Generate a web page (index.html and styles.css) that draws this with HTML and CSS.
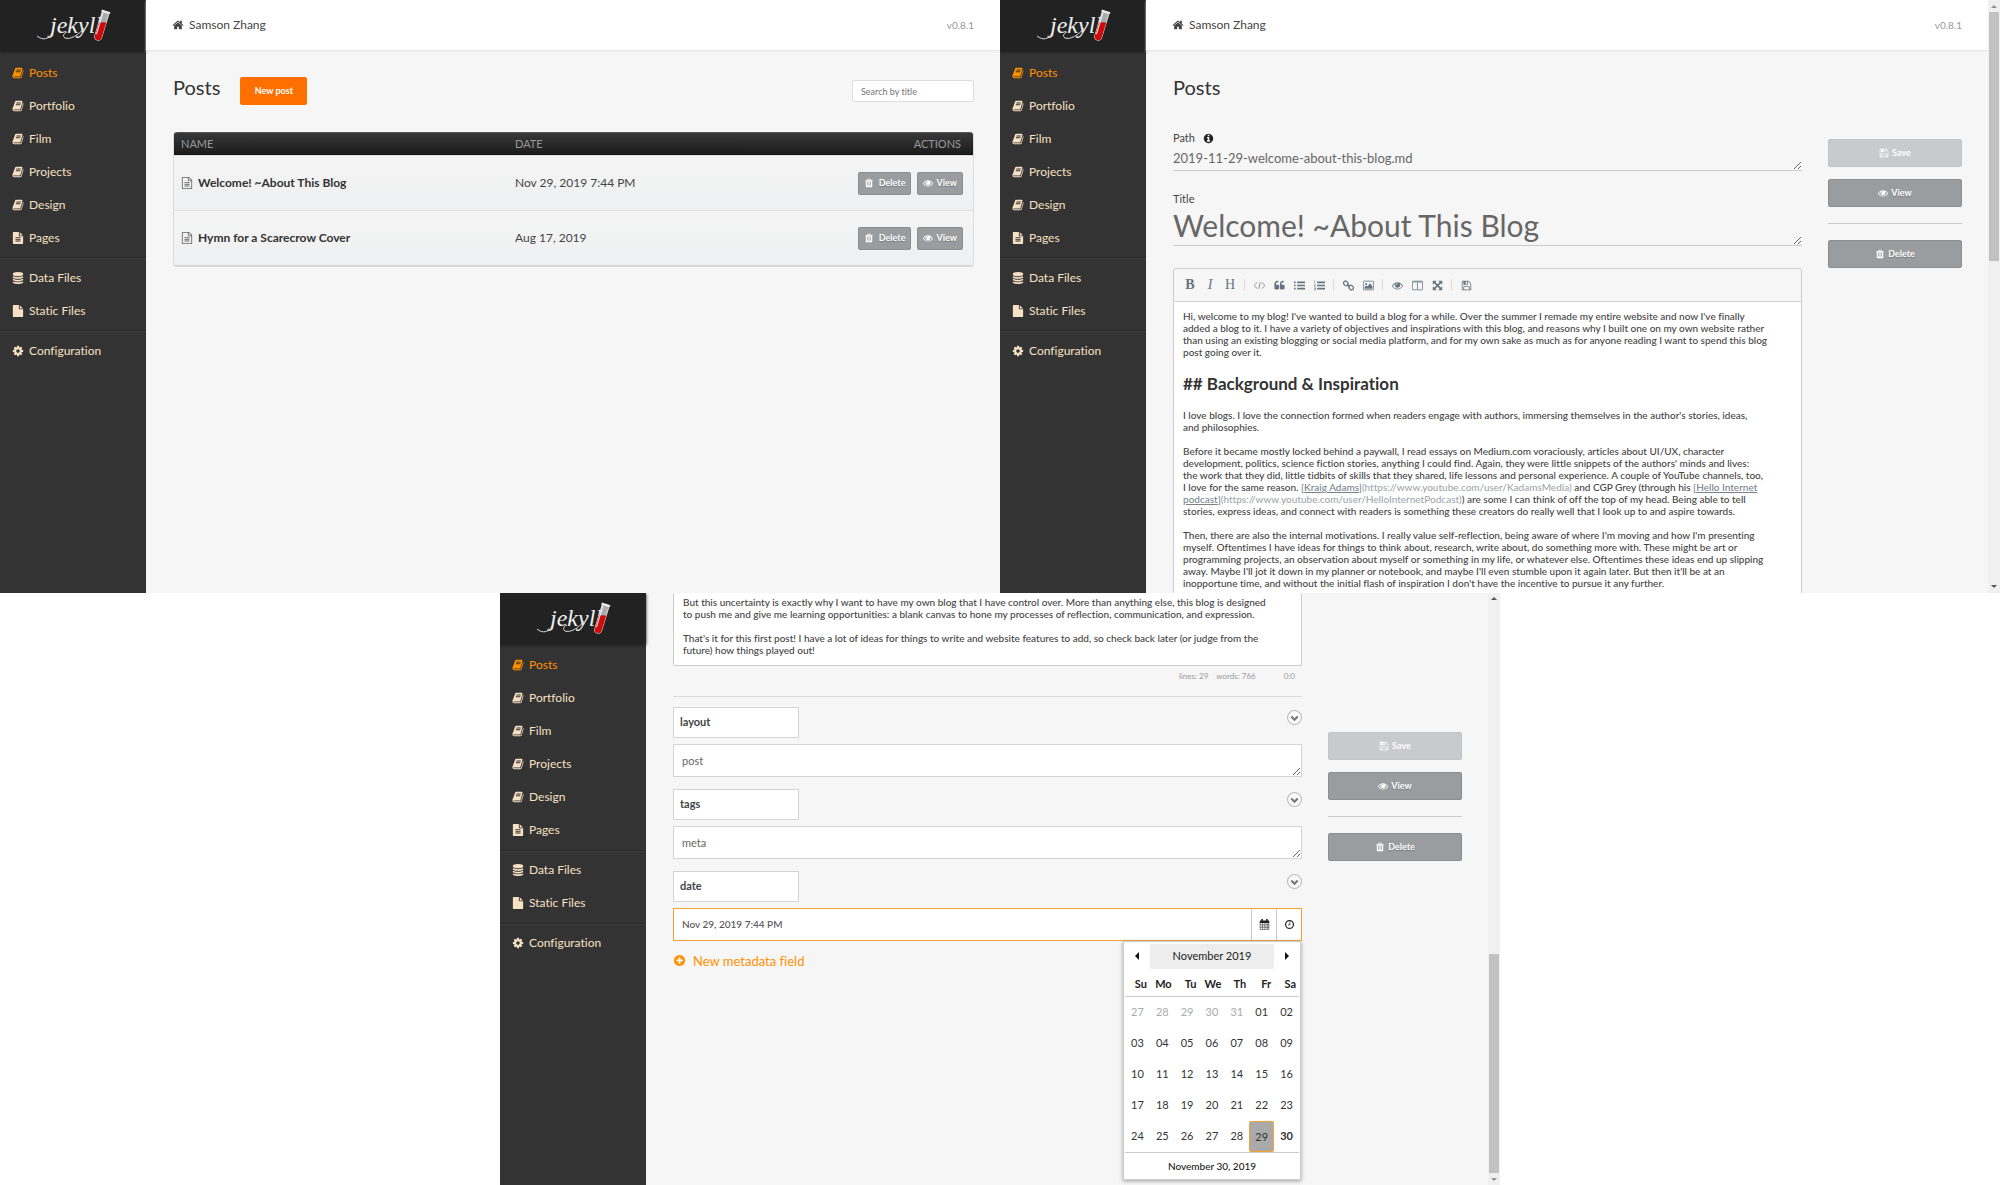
FILE: index.html
```
<!DOCTYPE html>
<html lang="en">
<head>
<meta charset="utf-8">
<title>Posts</title>
<link rel="stylesheet" href="styles.css">
</head>
<body>
<svg class="sprite" aria-hidden="true">
  <symbol id="home" viewBox="0 0 1792 1792"><path d="M1472 992v480q0 26-19 45t-45 19h-384v-384h-256v384h-384q-26 0-45-19t-19-45v-480q0-1 .5-3t.5-3l575-474 575 474q1 2 1 6zm223-69l-62 74q-8 9-21 11h-3q-13 0-21-7l-692-577-692 577q-12 8-24 7-13-2-21-11l-62-74q-8-10-7-23.500t11-21.500l719-599q32-26 76-26t76 26l244 204v-195q0-14 9-23t23-9h192q14 0 23 9t9 23v408l219 182q10 8 11 21.500t-7 23.500z"/></symbol>
  <symbol id="book" viewBox="0 0 1792 1792"><path d="M1703 478q40 57 18 129l-275 906q-19 64-76.500 107.500t-122.500 43.500h-923q-77 0-148.500-53.500t-99.500-131.500q-24-67-2-127 0-4 3-27t4-37q1-8-3-21.500t-3-19.500q2-11 8-21t16.500-23.500 16.500-23.500q23-38 45-91.500t30-91.500q3-10 .5-30t-.5-28q3-11 17-28t17-23q21-36 42-92t25-90q1-9-2.500-32t.5-28q4-13 22-30.500t22-22.500q19-26 42.500-84.500t27.500-96.500q1-8-3-25.500t-2-26.500q2-8 9-18t18-23 17-21q8-12 16.500-30.500t15-35 16-36 19.500-32 26.500-23.500 36-11.500 47.500 5.500l-1 3q38-9 51-9h761q74 0 114 56t18 130l-274 906q-36 119-71.500 153.500t-128.500 34.500h-869q-27 0-38 15-11 16-1 43 24 70 144 70h923q29 0 56-15.500t35-41.500l300-987q7-22 5-57 38 15 59 43zm-1064 2q-4 13 2 22.500t20 9.500h608q13 0 25.500-9.500t16.500-22.500l21-64q4-13-2-22.500t-20-9.500h-608q-13 0-25.500 9.500t-16.500 22.500zm-83 256q-4 13 2 22.500t20 9.500h608q13 0 25.500-9.500t16.500-22.500l21-64q4-13-2-22.500t-20-9.500h-608q-13 0-25.500 9.500t-16.500 22.500z"/></symbol>
  <symbol id="page" viewBox="0 0 1792 1792"><path d="M1596 476q14 14 28 36h-472v-472q22 14 36 28zm-476 164h544v1056q0 40-28 68t-68 28h-1344q-40 0-68-28t-28-68v-1600q0-40 28-68t68-28h800v544q0 40 28 68t68 28zm160 736v-64q0-14-9-23t-23-9h-704q-14 0-23 9t-9 23v64q0 14 9 23t23 9h704q14 0 23-9t9-23zm0-256v-64q0-14-9-23t-23-9h-704q-14 0-23 9t-9 23v64q0 14 9 23t23 9h704q14 0 23-9t9-23zm0-256v-64q0-14-9-23t-23-9h-704q-14 0-23 9t-9 23v64q0 14 9 23t23 9h704q14 0 23-9t9-23z"/></symbol>
  <symbol id="file" viewBox="0 0 1792 1792"><path d="M1152 512v-472q22 14 36 28l408 408q14 14 28 36h-472zm-128 32q0 40 28 68t68 28h544v1056q0 40-28 68t-68 28h-1344q-40 0-68-28t-28-68v-1600q0-40 28-68t68-28h800v544z"/></symbol>
  <symbol id="page-o" viewBox="0 0 1792 1792"><path d="M1596 380q28 28 48 76t20 88v1152q0 40-28 68t-68 28h-1344q-40 0-68-28t-28-68v-1600q0-40 28-68t68-28h896q40 0 88 20t76 48zm-444-244v376h376q-10-29-22-41l-313-313q-12-12-41-22zm384 1528v-1024h-416q-40 0-68-28t-28-68v-416h-768v1536h1280zm-1024-864q0-14 9-23t23-9h704q14 0 23 9t9 23v64q0 14-9 23t-23 9h-704q-14 0-23-9t-9-23v-64zm736 224q14 0 23 9t9 23v64q0 14-9 23t-23 9h-704q-14 0-23-9t-9-23v-64q0-14 9-23t23-9h704zm0 256q14 0 23 9t9 23v64q0 14-9 23t-23 9h-704q-14 0-23-9t-9-23v-64q0-14 9-23t23-9h704z"/></symbol>
  <symbol id="database" viewBox="0 0 1792 1792"><path d="M896 768q237 0 443-43t325-127v170q0 69-103 128t-280 93.500-385 34.500-385-34.500-280-93.500-103-128v-170q119 84 325 127t443 43zm0 768q237 0 443-43t325-127v170q0 69-103 128t-280 93.500-385 34.500-385-34.500-280-93.500-103-128v-170q119 84 325 127t443 43zm0-384q237 0 443-43t325-127v170q0 69-103 128t-280 93.500-385 34.500-385-34.500-280-93.500-103-128v-170q119 84 325 127t443 43zm0-1152q208 0 385 34.500t280 93.500 103 128v128q0 69-103 128t-280 93.500-385 34.500-385-34.500-280-93.500-103-128v-128q0-69 103-128t280-93.500 385-34.500z"/></symbol>
  <symbol id="cog" viewBox="0 0 1792 1792"><path d="M1152 896q0-106-75-181t-181-75-181 75-75 181 75 181 181 75 181-75 75-181zm512-109v222q0 12-8 23t-20 13l-185 28q-19 54-39 91 35 50 107 138 10 12 10 25t-9 23q-27 37-99 108t-94 71q-12 0-26-9l-138-108q-44 23-91 38-16 136-29 186-7 28-36 28h-222q-14 0-24.500-8.500t-11.500-21.500l-28-184q-49-16-90-37l-141 107q-10 9-25 9-14 0-25-11-126-114-165-168-7-10-7-23 0-12 8-23 15-21 51-66.500t54-70.500q-27-50-41-99l-183-27q-13-2-21-12.500t-8-23.500v-222q0-12 8-23t19-13l186-28q14-46 39-92-40-57-107-138-10-12-10-24 0-10 9-23 26-36 98.500-107.500t94.500-71.500q13 0 26 10l138 107q44-23 91-38 16-136 29-186 7-28 36-28h222q14 0 24.500 8.500t11.500 21.500l28 184q49 16 90 37l142-107q9-9 24-9 13 0 25 10 129 119 165 170 7 8 7 22 0 12-8 23-15 21-51 66.500t-54 70.500q26 50 41 98l183 28q13 2 21 12.500t8 23.500z"/></symbol>
  <symbol id="trash" viewBox="0 0 1792 1792"><path d="M704 1376v-704q0-14-9-23t-23-9h-64q-14 0-23 9t-9 23v704q0 14 9 23t23 9h64q14 0 23-9t9-23zm256 0v-704q0-14-9-23t-23-9h-64q-14 0-23 9t-9 23v704q0 14 9 23t23 9h64q14 0 23-9t9-23zm256 0v-704q0-14-9-23t-23-9h-64q-14 0-23 9t-9 23v704q0 14 9 23t23 9h64q14 0 23-9t9-23zm-544-992h448l-48-117q-7-9-17-11h-317q-10 2-17 11zm928 32v64q0 14-9 23t-23 9h-96v948q0 83-47 143.500t-113 60.500h-832q-66 0-113-58.500t-47-141.500v-952h-96q-14 0-23-9t-9-23v-64q0-14 9-23t23-9h309l70-167q15-37 54-63t79-26h320q40 0 79 26t54 63l70 167h309q14 0 23 9t9 23z"/></symbol>
  <symbol id="eye" viewBox="0 0 1792 1792"><path d="M1664 960q-152-236-381-353 61 104 61 225 0 185-131.500 316.500t-316.500 131.500-316.500-131.500-131.500-316.500q0-121 61-225-229 117-381 353 133 205 333.500 326.500t434.500 121.500 434.500-121.500 333.500-326.500zm-720-384q0-20-14-34t-34-14q-125 0-214.500 89.500t-89.500 214.500q0 20 14 34t34 14 34-14 14-34q0-86 61-147t147-61q20 0 34-14t14-34zm848 384q0 34-20 69-140 230-376.500 368.500t-499.500 138.500-499.500-139-376.500-368q-20-35-20-69t20-69q140-229 376.500-368t499.500-139 499.500 139 376.500 368q20 35 20 69z"/></symbol>
  <symbol id="save" viewBox="0 0 1792 1792"><path d="M512 1536h768v-384h-768v384zm896 0h128v-896q0-14-10-38.500t-20-34.500l-281-281q-10-10-34-20t-39-10v416q0 40-28 68t-68 28h-576q-40 0-68-28t-28-68v-416h-128v1280h128v-416q0-40 28-68t68-28h832q40 0 68 28t28 68v416zm-384-928v-320q0-13-9.500-22.500t-22.500-9.500h-192q-13 0-22.500 9.500t-9.500 22.500v320q0 13 9.500 22.500t22.500 9.500h192q13 0 22.500-9.500t9.500-22.500zm640 32v928q0 40-28 68t-68 28h-1344q-40 0-68-28t-28-68v-1344q0-40 28-68t68-28h928q40 0 88 20t76 48l280 280q28 28 48 76t20 88z"/></symbol>
  <symbol id="info" viewBox="0 0 1792 1792"><path d="M1152 1376v-160q0-14-9-23t-23-9h-96v-512q0-14-9-23t-23-9h-320q-14 0-23 9t-9 23v160q0 14 9 23t23 9h96v320h-96q-14 0-23 9t-9 23v160q0 14 9 23t23 9h448q14 0 23-9t9-23zm-128-896v-160q0-14-9-23t-23-9h-192q-14 0-23 9t-9 23v160q0 14 9 23t23 9h192q14 0 23-9t9-23zm640 416q0 209-103 385.500t-279.500 279.500-385.500 103-385.500-103-279.500-279.500-103-385.500 103-385.500 279.500-279.500 385.500-103 385.500 103 279.500 279.500 103 385.500z"/></symbol>
  <symbol id="plus" viewBox="0 0 1792 1792"><path d="M1344 960v-128q0-26-19-45t-45-19h-256v-256q0-26-19-45t-45-19h-128q-26 0-45 19t-19 45v256h-256q-26 0-45 19t-19 45v128q0 26 19 45t45 19h256v256q0 26 19 45t45 19h128q26 0 45-19t19-45v-256h256q26 0 45-19t19-45zm320-64q0 209-103 385.500t-279.500 279.500-385.500 103-385.500-103-279.500-279.500-103-385.500 103-385.500 279.500-279.500 385.500-103 385.500 103 279.500 279.500 103 385.500z"/></symbol>
  <symbol id="quote" viewBox="0 0 1792 1792"><path d="M832 960v384q0 80-56 136t-136 56h-384q-80 0-136-56t-56-136v-704q0-104 40.500-198.500t109.500-163.500 163.500-109.500 198.500-40.500h64q26 0 45 19t19 45v128q0 26-19 45t-45 19h-64q-106 0-181 75t-75 181v32q0 40 28 68t68 28h224q80 0 136 56t56 136zm896 0v384q0 80-56 136t-136 56h-384q-80 0-136-56t-56-136v-704q0-104 40.500-198.500t109.500-163.500 163.500-109.500 198.500-40.500h64q26 0 45 19t19 45v128q0 26-19 45t-45 19h-64q-106 0-181 75t-75 181v32q0 40 28 68t68 28h224q80 0 136 56t56 136z"/></symbol>
  <symbol id="code" viewBox="0 0 14 14"><path class="line" d="M4 3L0 7l4 4M10 3l4 4-4 4M8 3L6 11"/></symbol>
  <symbol id="ul" viewBox="0 0 14 14"><path d="M0 2h2v2H0zM0 6h2v2H0zM0 10h2v2H0zM4 2h10v2H4zM4 6h10v2H4zM4 10h10v2H4z"/></symbol>
  <symbol id="ol" viewBox="0 0 14 14"><path d="M4 2h10v2H4zM4 6h10v2H4zM4 10h10v2H4z"/><path class="line thin" d="M0 1h1v3M0 6h2l-2 2h2M0 10h2v3H0M0 11h2"/></symbol>
  <symbol id="link" viewBox="0 0 14 14"><g class="line mid"><rect x="1" y="2" width="6" height="5" rx="2" transform="rotate(45 4 4)"/><rect x="7" y="7" width="6" height="5" rx="2" transform="rotate(45 10 10)"/><path d="M5 5l4 4"/></g></symbol>
  <symbol id="picture" viewBox="0 0 14 14"><rect class="line" x="0.500" y="1.500" width="13" height="11" rx="1"/><circle cx="4" cy="5" r="1.300"/><path d="M2 11V9l2-2 2 1 3-4 3 4v3z"/></symbol>
  <symbol id="columns" viewBox="0 0 14 14"><rect class="line" x="0.500" y="1.500" width="13" height="11" rx="1"/><path class="line" d="M1 2.500h12M7 3v9"/></symbol>
  <symbol id="expand" viewBox="0 0 14 14"><path d="M1 1h5L1 6zM13 1v5L8 1zM1 13V8l5 5zM13 13H8l5-5z"/><path class="line wide" d="M3 3l8 8M11 3l-8 8"/></symbol>
  <symbol id="chevron" viewBox="0 0 14 14"><circle class="ring" cx="7" cy="7" r="6.500"/><path class="tick" d="M4 6l3 3 3-3"/></symbol>
  <symbol id="calendar" viewBox="0 0 14 14"><path d="M1 2h2V0h2v2h4V0h2v2h2v3H1z"/><path class="line thin" d="M1.500 4.500h11v9h-11zM1 7.500h12M1 10.500h12M4.500 5v8M7.500 5v8M10.500 5v8"/></symbol>
  <symbol id="clock" viewBox="0 0 14 14"><circle class="line mid" cx="7" cy="7" r="5"/><path class="line" d="M7.500 4v3.500H5"/></symbol>
  <symbol id="jekyll" viewBox="0 0 146 50">
    <text class="script" x="50" y="33">jekyll</text>
    <path d="M52 33c-3 6-9 8-15 3M84 28c-5 7-14 12-19 10-3-2-1-5 2-6" fill="none" stroke="#ddd"/>
    <g transform="rotate(17 101 26)"><path d="M98 12h7v25a3.500 3.500 0 0 1-7 0z" fill="#aaa" stroke="#ddd"/><path d="M98 23l7-2v16a3.500 3.500 0 0 1-7 0z" fill="#d00a0a"/><path d="M97 11h9" stroke="#eee" stroke-width="2"/><path d="M99 13v22" stroke="#eee"/></g>
  </symbol>
</svg>

<main class="board">
  <!-- Post list -->
  <section class="screen">
    <aside class="sidebar">
      <a class="logo" href="#" aria-label="Home"><svg><use href="#jekyll"/></svg></a>
      <nav>
        <a class="active" href="#"><svg class="icon"><use href="#book"/></svg>Posts</a>
        <a href="#"><svg class="icon"><use href="#book"/></svg>Portfolio</a>
        <a href="#"><svg class="icon"><use href="#book"/></svg>Film</a>
        <a href="#"><svg class="icon"><use href="#book"/></svg>Projects</a>
        <a href="#"><svg class="icon"><use href="#book"/></svg>Design</a>
        <a href="#"><svg class="icon"><use href="#page"/></svg>Pages</a>
        <hr>
        <a href="#"><svg class="icon"><use href="#database"/></svg>Data Files</a>
        <a href="#"><svg class="icon"><use href="#file"/></svg>Static Files</a>
        <hr>
        <a href="#"><svg class="icon"><use href="#cog"/></svg>Configuration</a>
      </nav>
    </aside>
    <div class="page">
      <header class="topbar"><a href="#"><svg class="icon"><use href="#home"/></svg>Samson Zhang</a><span class="version">v0.8.1</span></header>
      <div class="content">
        <div class="heading">
          <h1>Posts</h1>
          <button class="btn primary">New post</button>
          <input class="search" type="search" placeholder="Search by title" aria-label="Search by title">
        </div>
        <table class="posts">
          <thead><tr><th>NAME</th><th>DATE</th><th>ACTIONS</th></tr></thead>
          <tbody>
            <tr><td><a href="#"><svg class="icon"><use href="#page-o"/></svg>Welcome! ~About This Blog</a></td><td>Nov 29, 2019 7:44 PM</td><td><div class="actions"><button class="btn"><svg class="icon"><use href="#trash"/></svg>Delete</button><button class="btn"><svg class="icon"><use href="#eye"/></svg>View</button></div></td></tr>
            <tr><td><a href="#"><svg class="icon"><use href="#page-o"/></svg>Hymn for a Scarecrow Cover</a></td><td>Aug 17, 2019</td><td><div class="actions"><button class="btn"><svg class="icon"><use href="#trash"/></svg>Delete</button><button class="btn"><svg class="icon"><use href="#eye"/></svg>View</button></div></td></tr>
          </tbody>
        </table>
      </div>
    </div>
  </section>

  <!-- Post editor, top of the page -->
  <section class="screen">
    <aside class="sidebar">
      <a class="logo" href="#" aria-label="Home"><svg><use href="#jekyll"/></svg></a>
      <nav>
        <a class="active" href="#"><svg class="icon"><use href="#book"/></svg>Posts</a>
        <a href="#"><svg class="icon"><use href="#book"/></svg>Portfolio</a>
        <a href="#"><svg class="icon"><use href="#book"/></svg>Film</a>
        <a href="#"><svg class="icon"><use href="#book"/></svg>Projects</a>
        <a href="#"><svg class="icon"><use href="#book"/></svg>Design</a>
        <a href="#"><svg class="icon"><use href="#page"/></svg>Pages</a>
        <hr>
        <a href="#"><svg class="icon"><use href="#database"/></svg>Data Files</a>
        <a href="#"><svg class="icon"><use href="#file"/></svg>Static Files</a>
        <hr>
        <a href="#"><svg class="icon"><use href="#cog"/></svg>Configuration</a>
      </nav>
    </aside>
    <div class="page">
      <header class="topbar"><a href="#"><svg class="icon"><use href="#home"/></svg>Samson Zhang</a><span class="version">v0.8.1</span></header>
      <div class="content">
        <div class="heading"><h1>Posts</h1></div>
        <div class="editing">
          <div class="fields">
            <label for="path">Path <svg class="icon"><use href="#info"/></svg></label>
            <textarea id="path" class="path" rows="1">2019-11-29-welcome-about-this-blog.md</textarea>
            <label for="title">Title</label>
            <textarea id="title" class="title" rows="1">Welcome! ~About This Blog</textarea>
            <div class="editor">
              <div class="toolbar">
                <button class="b" aria-label="Bold">B</button><button class="i" aria-label="Italic">I</button><button aria-label="Heading">H</button><i></i>
                <button aria-label="Code"><svg class="icon"><use href="#code"/></svg></button><button aria-label="Quote"><svg class="icon"><use href="#quote"/></svg></button><button aria-label="Bullets"><svg class="icon"><use href="#ul"/></svg></button><button aria-label="Numbers"><svg class="icon"><use href="#ol"/></svg></button><i></i>
                <button aria-label="Link"><svg class="icon"><use href="#link"/></svg></button><button aria-label="Image"><svg class="icon"><use href="#picture"/></svg></button><i></i>
                <button aria-label="Preview"><svg class="icon"><use href="#eye"/></svg></button><button aria-label="Side by side"><svg class="icon"><use href="#columns"/></svg></button><button aria-label="Fullscreen"><svg class="icon"><use href="#expand"/></svg></button><i></i>
                <button aria-label="Save"><svg class="icon"><use href="#save"/></svg></button>
              </div>
              <div class="text">
                <p>Hi, welcome to my blog! I've wanted to build a blog for a while. Over the summer I remade my entire website and now I've finally<br>added a blog to it. I have a variety of objectives and inspirations with this blog, and reasons why I built one on my own website rather<br>than using an existing blogging or social media platform, and for my own sake as much as for anyone reading I want to spend this blog<br>post going over it.</p>
                <h2>## Background &amp; Inspiration</h2>
                <p>I love blogs. I love the connection formed when readers engage with authors, immersing themselves in the author's stories, ideas,<br>and philosophies.</p>
                <p>Before it became mostly locked behind a paywall, I read essays on Medium.com voraciously, articles about UI/UX, character<br>development, politics, science fiction stories, anything I could find. Again, they were little snippets of the authors' minds and lives:<br>the work that they did, little tidbits of skills that they shared, life lessons and personal experience. A couple of YouTube channels, too,<br>I love for the same reason. <span class="md">[<u>Kraig Adams</u>]</span><span class="url">(https://www.youtube.com/user/KadamsMedia)</span> and CGP Grey (through his <span class="md">[<u>Hello Internet </u></span><br><span class="md"><u>podcast</u>]</span><span class="url">(https://www.youtube.com/user/HelloInternetPodcast)</span>) are some I can think of off the top of my head. Being able to tell<br>stories, express ideas, and connect with readers is something these creators do really well that I look up to and aspire towards.</p>
                <p>Then, there are also the internal motivations. I really value self-reflection, being aware of where I'm moving and how I'm presenting<br>myself. Oftentimes I have ideas for things to think about, research, write about, do something more with. These might be art or<br>programming projects, an observation about myself or something in my life, or whatever else. Oftentimes these ideas end up slipping<br>away. Maybe I'll jot it down in my planner or notebook, and maybe I'll even stumble upon it again later. But then it'll be at an<br>inopportune time, and without the initial flash of inspiration I don't have the incentive to pursue it any further.</p>
              </div>
            </div>
          </div>
          <div class="side">
            <button class="btn" disabled><svg class="icon"><use href="#save"/></svg>Save</button>
            <button class="btn"><svg class="icon"><use href="#eye"/></svg>View</button>
            <hr>
            <button class="btn"><svg class="icon"><use href="#trash"/></svg>Delete</button>
          </div>
        </div>
      </div>
    </div>
    <div class="scrollbar at-top" aria-hidden="true"><b class="up"></b><span class="thumb"></span><b class="down"></b></div>
  </section>

  <!-- Post editor, scrolled to the metadata -->
  <section class="screen lower">
    <aside class="sidebar">
      <a class="logo" href="#" aria-label="Home"><svg><use href="#jekyll"/></svg></a>
      <nav>
        <a class="active" href="#"><svg class="icon"><use href="#book"/></svg>Posts</a>
        <a href="#"><svg class="icon"><use href="#book"/></svg>Portfolio</a>
        <a href="#"><svg class="icon"><use href="#book"/></svg>Film</a>
        <a href="#"><svg class="icon"><use href="#book"/></svg>Projects</a>
        <a href="#"><svg class="icon"><use href="#book"/></svg>Design</a>
        <a href="#"><svg class="icon"><use href="#page"/></svg>Pages</a>
        <hr>
        <a href="#"><svg class="icon"><use href="#database"/></svg>Data Files</a>
        <a href="#"><svg class="icon"><use href="#file"/></svg>Static Files</a>
        <hr>
        <a href="#"><svg class="icon"><use href="#cog"/></svg>Configuration</a>
      </nav>
    </aside>
    <div class="page">
      <div class="content scrolled">
        <div class="editing">
          <div class="fields">
            <div class="editor tail">
              <div class="text">
                <p>But this uncertainty is exactly why I want to have my own blog that I have control over. More than anything else, this blog is designed<br>to push me and give me learning opportunities: a blank canvas to hone my processes of reflection, communication, and expression.</p>
                <p>That's it for this first post! I have a lot of ideas for things to write and website features to add, so check back later (or judge from the<br>future) how things played out!</p>
              </div>
            </div>
            <div class="status"><span>lines: 29</span><span>words: 766</span><span class="cursor">0:0</span></div>
            <hr>
            <div class="meta">
              <div class="key"><input type="text" value="layout" aria-label="Field name"><button aria-label="Type"><svg><use href="#chevron"/></svg></button></div>
              <textarea rows="1" aria-label="layout">post</textarea>
            </div>
            <div class="meta">
              <div class="key"><input type="text" value="tags" aria-label="Field name"><button aria-label="Type"><svg><use href="#chevron"/></svg></button></div>
              <textarea rows="1" aria-label="tags">meta</textarea>
            </div>
            <div class="meta">
              <div class="key"><input type="text" value="date" aria-label="Field name"><button aria-label="Type"><svg><use href="#chevron"/></svg></button></div>
              <div class="picker">
                <input type="text" value="Nov 29, 2019 7:44 PM" aria-label="date">
                <button aria-label="Pick date"><svg class="icon"><use href="#calendar"/></svg></button>
                <button aria-label="Pick time"><svg class="icon"><use href="#clock"/></svg></button>
                <div class="calendar">
                  <div class="month"><button class="prev" aria-label="Previous month"></button><button class="name">November 2019</button><button class="next" aria-label="Next month"></button></div>
                  <table>
                    <thead><tr><th>Su</th><th>Mo</th><th>Tu</th><th>We</th><th>Th</th><th>Fr</th><th>Sa</th></tr></thead>
                    <tbody>
                      <tr><td class="off">27</td><td class="off">28</td><td class="off">29</td><td class="off">30</td><td class="off">31</td><td>01</td><td>02</td></tr>
                      <tr><td>03</td><td>04</td><td>05</td><td>06</td><td>07</td><td>08</td><td>09</td></tr>
                      <tr><td>10</td><td>11</td><td>12</td><td>13</td><td>14</td><td>15</td><td>16</td></tr>
                      <tr><td>17</td><td>18</td><td>19</td><td>20</td><td>21</td><td>22</td><td>23</td></tr>
                      <tr><td>24</td><td>25</td><td>26</td><td>27</td><td>28</td><td><span class="picked">29</span></td><td class="today">30</td></tr>
                    </tbody>
                  </table>
                  <button class="foot">November 30, 2019</button>
                </div>
              </div>
            </div>
            <a class="add" href="#"><svg class="icon"><use href="#plus"/></svg>New metadata field</a>
          </div>
          <div class="side">
            <button class="btn" disabled><svg class="icon"><use href="#save"/></svg>Save</button>
            <button class="btn"><svg class="icon"><use href="#eye"/></svg>View</button>
            <hr>
            <button class="btn"><svg class="icon"><use href="#trash"/></svg>Delete</button>
          </div>
        </div>
      </div>
    </div>
    <div class="scrollbar at-bottom" aria-hidden="true"><b class="up"></b><span class="thumb"></span><b class="down"></b></div>
  </section>
</main>
</body>
</html>
```
FILE: styles.css
```
* { box-sizing: border-box; }
body { margin: 0; background: #fff; color: #444; font: 12px/16px Lato, sans-serif; font-variant-ligatures: none; }
button, input, textarea { font: inherit; color: inherit; margin: 0; padding: 0; border: 0; background: none; border-radius: 0; font-variant-ligatures: none; outline: 0; }
a { color: inherit; text-decoration: none; }
hr { margin: 0; border: 0; }
.sprite { display: none; }
.icon { width: 12px; height: 12px; flex: none; fill: currentColor; }
.line { fill: none; stroke: currentColor; }
.thin { opacity: .7; }
.mid { stroke-width: 1.5; }
.wide { stroke-width: 2; }

.board { display: grid; grid-template-columns: repeat(4, 1fr); grid-template-rows: 50vh 50vh; }
.screen { grid-column: span 2; display: flex; min-height: 0; overflow: hidden; background: #f6f6f6; }
.screen.lower { grid-column: 2 / span 2; }

/* Sidebar */
.sidebar { width: 146px; flex: none; background: #333; color: #f7e0c4; }
.logo { display: block; height: 51px; background: #222; box-shadow: 0 1px 3px #1a1a1a; }
.logo svg { display: block; width: 146px; height: 50px; }
.script { font: italic 24px "Liberation Serif", serif; fill: #eee; }
.sidebar nav { padding-top: 5px; }
.sidebar nav a { display: flex; align-items: center; gap: 5px; height: 33px; padding-left: 12px; }
.sidebar nav hr { height: 2px; margin: 3px 0 2px; background: #3d3d3d; border-top: 1px solid #292929; }
.sidebar .active { color: #ff9100; }

/* Page frame */
.page { flex: 1; min-width: 0; }
.topbar { display: flex; justify-content: space-between; align-items: center; height: 51px; padding: 0 26px; background: #fff; border-bottom: 1px solid #e8e8e8; box-shadow: 0 1px 2px #eee; }
.topbar a { display: flex; align-items: center; gap: 5px; }
.version { font-size: 10px; color: #999; }
.content { padding: 24px 26px 0 27px; }
.content.scrolled { padding-top: 0; }
.heading { display: flex; align-items: center; height: 32px; }
h1 { margin: 0; font-size: 20px; line-height: 26px; font-weight: 400; color: #333; padding-bottom: 8px; }
.btn { display: flex; align-items: center; justify-content: center; gap: 3px; height: 28px; border-radius: 2px; background: #9a9d9f; border: 1px solid #8b8d8f; color: #fff; font-size: 9px; font-weight: 700; text-shadow: 0 1px 1px #777; }
.btn .icon { width: 10px; height: 10px; }
.btn:disabled { background: #c9cacb; border-color: #c2c3c4; text-shadow: none; }
.btn.primary { width: 67px; margin-left: 20px; background: #ff6f00; border-color: #ff6f00; text-shadow: none; }
.search { width: 122px; height: 22px; margin-left: auto; padding: 0 8px; font-size: 9px; background: #fff; border: 1px solid #ddd; border-radius: 2px; }
.search::placeholder { color: #757575; opacity: 1; }

/* Post list */
.posts { width: 100%; margin-top: 25px; border-collapse: separate; border-spacing: 0; table-layout: fixed; border: 1px solid #ddd; border-top: 0; border-bottom: 2px solid #d8d8d8; border-radius: 3px; }
.posts th { height: 23px; padding: 0 7px; background: linear-gradient(#383838, #1c1c1c); border-top: 1px solid #555; border-bottom: 1px solid #111; color: #999; font-size: 11px; font-weight: 400; text-align: left; }
.posts th:first-child { width: 334px; border-top-left-radius: 3px; }
.posts th:last-child { text-align: right; padding-right: 12px; border-top-right-radius: 3px; }
.posts td { height: 55px; padding: 0 7px; background: linear-gradient(#f4f4f4, #eff0f1); border-top: 1px solid #e2e2e2; }
.posts td:last-child { padding-right: 10px; }
.posts td a { display: flex; align-items: center; gap: 5px; font-weight: 700; color: #333; }
.posts td a .icon { color: #666; }
.actions { display: flex; justify-content: flex-end; gap: 6px; }
.actions .btn { height: 23px; padding: 0 5px; }
.actions .btn:first-child { gap: 5px; }

/* Editor */
.editing { display: grid; grid-template-columns: minmax(0, 1fr) 134px; gap: 26px; }
.fields label { display: flex; align-items: center; gap: 8px; height: 16px; font-size: 11px; }
.fields label .icon { width: 11px; height: 11px; color: #222; }
.heading + .editing .fields { padding-top: 23px; }
.path, .title { display: block; width: 100%; border-bottom: 1px solid #ccc; color: #666; overflow: hidden; }
.path { height: 25px; font-size: 13px; line-height: 24px; margin-bottom: 20px; }
.title { height: 39px; font-size: 30px; line-height: 36px; margin-bottom: 22px; }
.editor { border: 1px solid #ccc; border-radius: 2px; background: #fff; }
.editor.tail { border-top: 0; }
.toolbar { display: flex; align-items: center; height: 33px; padding-left: 6px; background: #f6f6f6; border-bottom: 1px solid #d5d5d5; color: #657480; }
.toolbar button { display: flex; align-items: center; justify-content: center; width: 20px; font: 14px/20px "Liberation Serif", serif; }
.toolbar .b { font-weight: 700; }
.toolbar .i { font-style: italic; }
.toolbar i { width: 1px; height: 12px; margin: 0 4px; background: #ddd; }
.toolbar .icon { width: 11px; height: 11px; }
.text { padding: 8px 9px; font-size: 10px; line-height: 12px; font-weight: 500; white-space: nowrap; }
.text p { margin: 0 0 12px; }
.text p:last-child { margin: 0; }
.text h2 { margin: 0 0 12px; padding: 3px 0; font-size: 17px; line-height: 21px; color: #333; }
.md { color: #78838c; }
.url { color: #a0a8ad; }
.tail .text { padding: 3px 9px 9px; }

.side { display: flex; flex-direction: column; gap: 12px; padding-top: 32px; }
.side hr { height: 1px; margin: 4px 0; background: #ccc; }
.scrolled .side { padding-top: 139px; }

/* Metadata */
.status { display: flex; justify-content: flex-end; gap: 8px; height: 20px; padding-right: 7px; font-size: 8px; line-height: 20px; color: #999; }
.cursor { margin-left: 20px; }
.status + hr { height: 1px; margin: 10px 0; background: #ddd; }
.meta { margin-bottom: 12px; font-size: 11px; }
.key { display: flex; justify-content: space-between; height: 31px; margin-bottom: 6px; }
.key input { width: 126px; padding: 0 6px; background: #fff; border: 1px solid #d5d5d5; font-weight: 700; font-size: 11px; }
.key button { width: 15px; height: 15px; margin-top: 3px; }
.key svg { display: block; width: 15px; height: 15px; }
.ring { fill: #fafafa; stroke: #bbb; }
.tick { fill: none; stroke: #777; stroke-width: 2; }
.meta > textarea { display: block; width: 100%; height: 33px; padding: 0 8px; line-height: 31px; background: #fff; border: 1px solid #d5d5d5; color: #666; overflow: hidden; }
.picker { position: relative; display: flex; height: 33px; background: #fff; border: 1px solid #f5a32f; color: #222; }
.picker > input { flex: 1; min-width: 0; padding: 0 8px; color: #555; font-size: 10px; font-weight: 500; }
.picker > button { width: 25px; border-left: 1px solid #ccc; display: flex; align-items: center; justify-content: center; }
.picker .icon { width: 11px; height: 11px; }
.add { display: flex; align-items: center; gap: 7px; height: 16px; font-size: 13px; color: #ff9100; }
.add .icon { width: 13px; height: 13px; }

.calendar { position: absolute; z-index: 1; top: 32px; right: 0; width: 178px; background: #fff; border: 1px solid #ccc; box-shadow: 0 1px 4px #999; font-size: 11px; }
.month { display: grid; grid-template-columns: 26px 1fr 26px; padding-top: 2px; }
.month .name { height: 25px; background: #ededed; border-radius: 2px; font-size: 11px; }
.prev, .next { display: grid; place-items: center; }
.prev::before, .next::after { content: ""; border: 4px solid transparent; }
.prev::before { border-right-color: #111; border-left: 0; }
.next::after { border-left-color: #111; border-right: 0; }
.calendar table { width: 174px; margin: 0 1px; table-layout: fixed; border-collapse: separate; border-spacing: 0; border-bottom: 1px solid #ccc; text-align: center; }
.calendar th { height: 28px; padding: 4px 3px 0 0; border-bottom: 1px solid #ccc; font-size: 11px; text-align: right; }
.calendar td { height: 31px; padding: 0; color: #333; }
.calendar td.off { color: #aaa; }
.calendar td.today { font-weight: 700; }
.picked { display: block; line-height: 29px; background: #aaa; border: 1px solid #f5a32f; border-radius: 2px; }
.foot { width: 100%; height: 26px; font-size: 10px; font-weight: 500; }

/* Window scrollbar */
.scrollbar { display: flex; flex-direction: column; align-items: center; width: 12px; flex: none; background: #f0f0f0; }
.thumb { width: 10px; background: #c1c1c1; }
.up, .down { width: 6px; height: 12px; display: grid; place-items: center; }
.up::before, .down::before { content: ""; border: 3px solid transparent; }
.up::before { border-bottom-color: #555; border-top: 0; }
.down::before { border-top-color: #555; border-bottom: 0; }
.at-top .thumb { height: 42%; margin-bottom: auto; }
.at-bottom .thumb { height: 37%; margin-top: auto; }
.at-top .up, .at-bottom .down { opacity: .6; }
```
